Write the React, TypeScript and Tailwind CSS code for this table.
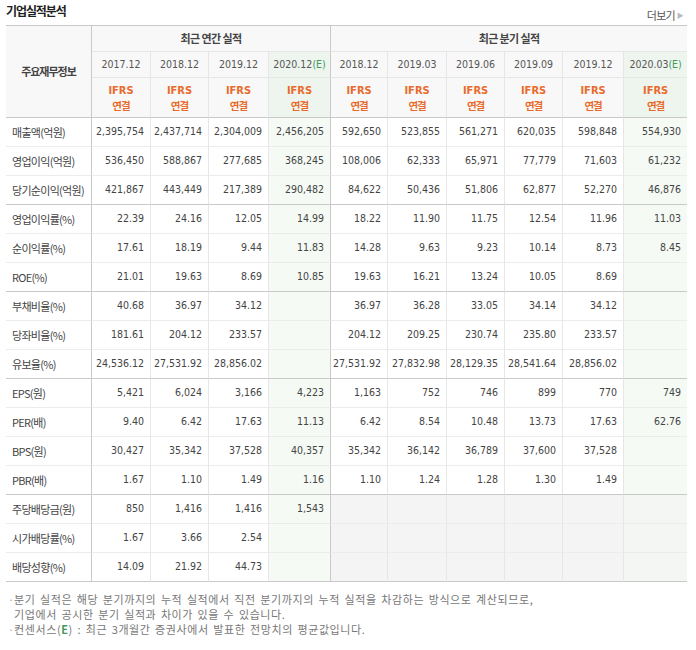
import React from "react";

const NUM_FONT = "font-['DejaVu_Sans_Condensed','Liberation_Sans',sans-serif]";
const KR_FONT = "font-['Noto_Sans_CJK_KR',sans-serif]";

const colWidths = [86, 59, 58, 60, 62, 57, 59, 58, 58, 61, 63];

const annualDates = ["2017.12", "2018.12", "2019.12", "2020.12"];
const quarterDates = ["2018.12", "2019.03", "2019.06", "2019.09", "2019.12", "2020.03"];

// null = 데이터 없음(회색 칸)
type Cell = string | null;

const rows: { label: string; values: Cell[]; groupEnd?: boolean }[] = [
  { label: "매출액(억원)", values: ["2,395,754", "2,437,714", "2,304,009", "2,456,205", "592,650", "523,855", "561,271", "620,035", "598,848", "554,930"] },
  { label: "영업이익(억원)", values: ["536,450", "588,867", "277,685", "368,245", "108,006", "62,333", "65,971", "77,779", "71,603", "61,232"] },
  { label: "당기순이익(억원)", values: ["421,867", "443,449", "217,389", "290,482", "84,622", "50,436", "51,806", "62,877", "52,270", "46,876"], groupEnd: true },
  { label: "영업이익률(%)", values: ["22.39", "24.16", "12.05", "14.99", "18.22", "11.90", "11.75", "12.54", "11.96", "11.03"] },
  { label: "순이익률(%)", values: ["17.61", "18.19", "9.44", "11.83", "14.28", "9.63", "9.23", "10.14", "8.73", "8.45"] },
  { label: "ROE(%)", values: ["21.01", "19.63", "8.69", "10.85", "19.63", "16.21", "13.24", "10.05", "8.69", ""], groupEnd: true },
  { label: "부채비율(%)", values: ["40.68", "36.97", "34.12", "", "36.97", "36.28", "33.05", "34.14", "34.12", ""] },
  { label: "당좌비율(%)", values: ["181.61", "204.12", "233.57", "", "204.12", "209.25", "230.74", "235.80", "233.57", ""] },
  { label: "유보율(%)", values: ["24,536.12", "27,531.92", "28,856.02", "", "27,531.92", "27,832.98", "28,129.35", "28,541.64", "28,856.02", ""], groupEnd: true },
  { label: "EPS(원)", values: ["5,421", "6,024", "3,166", "4,223", "1,163", "752", "746", "899", "770", "749"] },
  { label: "PER(배)", values: ["9.40", "6.42", "17.63", "11.13", "6.42", "8.54", "10.48", "13.73", "17.63", "62.76"] },
  { label: "BPS(원)", values: ["30,427", "35,342", "37,528", "40,357", "35,342", "36,142", "36,789", "37,600", "37,528", ""] },
  { label: "PBR(배)", values: ["1.67", "1.10", "1.49", "1.16", "1.10", "1.24", "1.28", "1.30", "1.49", ""], groupEnd: true },
  { label: "주당배당금(원)", values: ["850", "1,416", "1,416", "1,543", null, null, null, null, null, null] },
  { label: "시가배당률(%)", values: ["1.67", "3.66", "2.54", "", null, null, null, null, null, null] },
  { label: "배당성향(%)", values: ["14.09", "21.92", "44.73", "", null, null, null, null, null, null], groupEnd: true },
];

const isEstimate = (i: number) => i === 3 || i === 9;

function rightBorder(i: number) {
  if (i === 9) return "";
  if (i === 3) return "border-r border-r-[#c9c9c9]";
  return "border-r border-r-[#e6e6e6]";
}

function Estimate() {
  return <span className="text-[#3f9a5c]">(E)</span>;
}

export default function App() {
  return (
    <div className="w-[696px] h-[650px] bg-white pl-[6px] pr-[9px] text-[#333]">
      <div className="flex justify-between h-[25px]">
        <h2 className={`${KR_FONT} pt-[2px] text-[12px] font-bold tracking-[-1.1px] text-[#222]`}>
          기업실적분석
        </h2>
        <a href="#" className={`${KR_FONT} flex items-center gap-[2px] pt-[6px] pr-[4px] text-[11px] tracking-[-0.8px] text-[#555]`}>
          더보기
          <span className="text-[7px] text-[#bbb]">▶</span>
        </a>
      </div>

      <table className="table-fixed border-separate border-spacing-0 border-t border-[#c9c9c9] w-[681px]">
        <colgroup>
          {colWidths.map((w, i) => (
            <col key={i} style={{ width: w }} />
          ))}
        </colgroup>
        <thead>
          <tr className="h-[26px]">
            <th
              rowSpan={3}
              className={`${KR_FONT} bg-[#f8f8f8] border-r border-b border-[#c9c9c9] text-[11px] font-bold tracking-[-1px] text-[#444]`}
            >
              주요재무정보
            </th>
            <th
              colSpan={4}
              className={`${KR_FONT} bg-[#f8f8f8] border-r border-r-[#c9c9c9] border-b border-b-[#e6e6e6] text-[11px] font-bold tracking-[-0.6px] text-[#444]`}
            >
              최근 연간 실적
            </th>
            <th
              colSpan={6}
              className={`${KR_FONT} bg-[#f8f8f8] border-b border-b-[#e6e6e6] text-[11px] font-bold tracking-[-0.6px] text-[#444]`}
            >
              최근 분기 실적
            </th>
          </tr>
          <tr className="h-[26px]">
            {[...annualDates, ...quarterDates].map((d, i) => (
              <th
                key={i}
                className={`${NUM_FONT} font-normal text-[10.5px] text-[#555] border-b border-b-[#e6e6e6] ${rightBorder(i)} ${
                  isEstimate(i) ? "bg-[#eef5ef]" : "bg-[#f8f8f8]"
                }`}
              >
                {d}
                {isEstimate(i) && <Estimate />}
              </th>
            ))}
          </tr>
          <tr className="h-[40px]">
            {colWidths.slice(1).map((_, i) => (
              <th
                key={i}
                className={`font-bold text-[#e96b2c] leading-[15px] border-b border-b-[#c9c9c9] ${rightBorder(i)} ${
                  isEstimate(i) ? "bg-[#eef5ef]" : "bg-[#f8f8f8]"
                }`}
              >
                <div className={`${NUM_FONT} text-[11px]`}>IFRS</div>
                <div className={`${KR_FONT} text-[10.5px] tracking-[-1px]`}>연결</div>
              </th>
            ))}
          </tr>
        </thead>
        <tbody>
          {rows.map((row) => {
            const bottom = row.groupEnd ? "border-b border-b-[#c9c9c9]" : "border-b border-b-[#ececec]";
            return (
              <tr key={row.label} className="h-[29px]">
                <td
                  className={`${KR_FONT} pl-[6px] text-left text-[11px] tracking-[-0.7px] text-[#444] border-r border-r-[#c9c9c9] ${bottom}`}
                >
                  {row.label}
                </td>
                {row.values.map((v, i) => {
                  let bg = "bg-white";
                  if (v === null) bg = i === 9 ? "bg-[#f3f6f3]" : "bg-[#f4f4f4]";
                  else if (isEstimate(i)) bg = "bg-[#f5faf5]";
                  return (
                    <td
                      key={i}
                      className={`${NUM_FONT} pr-[6px] text-right text-[10.5px] text-[#444] ${bottom} ${rightBorder(i)} ${bg}`}
                    >
                      {v}
                    </td>
                  );
                })}
              </tr>
            );
          })}
        </tbody>
      </table>

      <ul className={`${KR_FONT} mt-[10px] text-[11px] leading-[15px] tracking-[0.6px] [word-spacing:1.5px] text-[#777]`}>
        <li className="flex">
          <span className="w-[8px] pl-[2px] text-[#aaa]">·</span>
          <span>
            분기 실적은 해당 분기까지의 누적 실적에서 직전 분기까지의 누적 실적을 차감하는 방식으로 계산되므로,
            <br />
            기업에서 공시한 분기 실적과 차이가 있을 수 있습니다.
          </span>
        </li>
        <li className="flex">
          <span className="w-[8px] pl-[2px] text-[#aaa]">·</span>
          <span>
            컨센서스(<b className="text-[#3f9a5c]">E</b>) : 최근 3개월간 증권사에서 발표한 전망치의 평균값입니다.
          </span>
        </li>
      </ul>
    </div>
  );
}
